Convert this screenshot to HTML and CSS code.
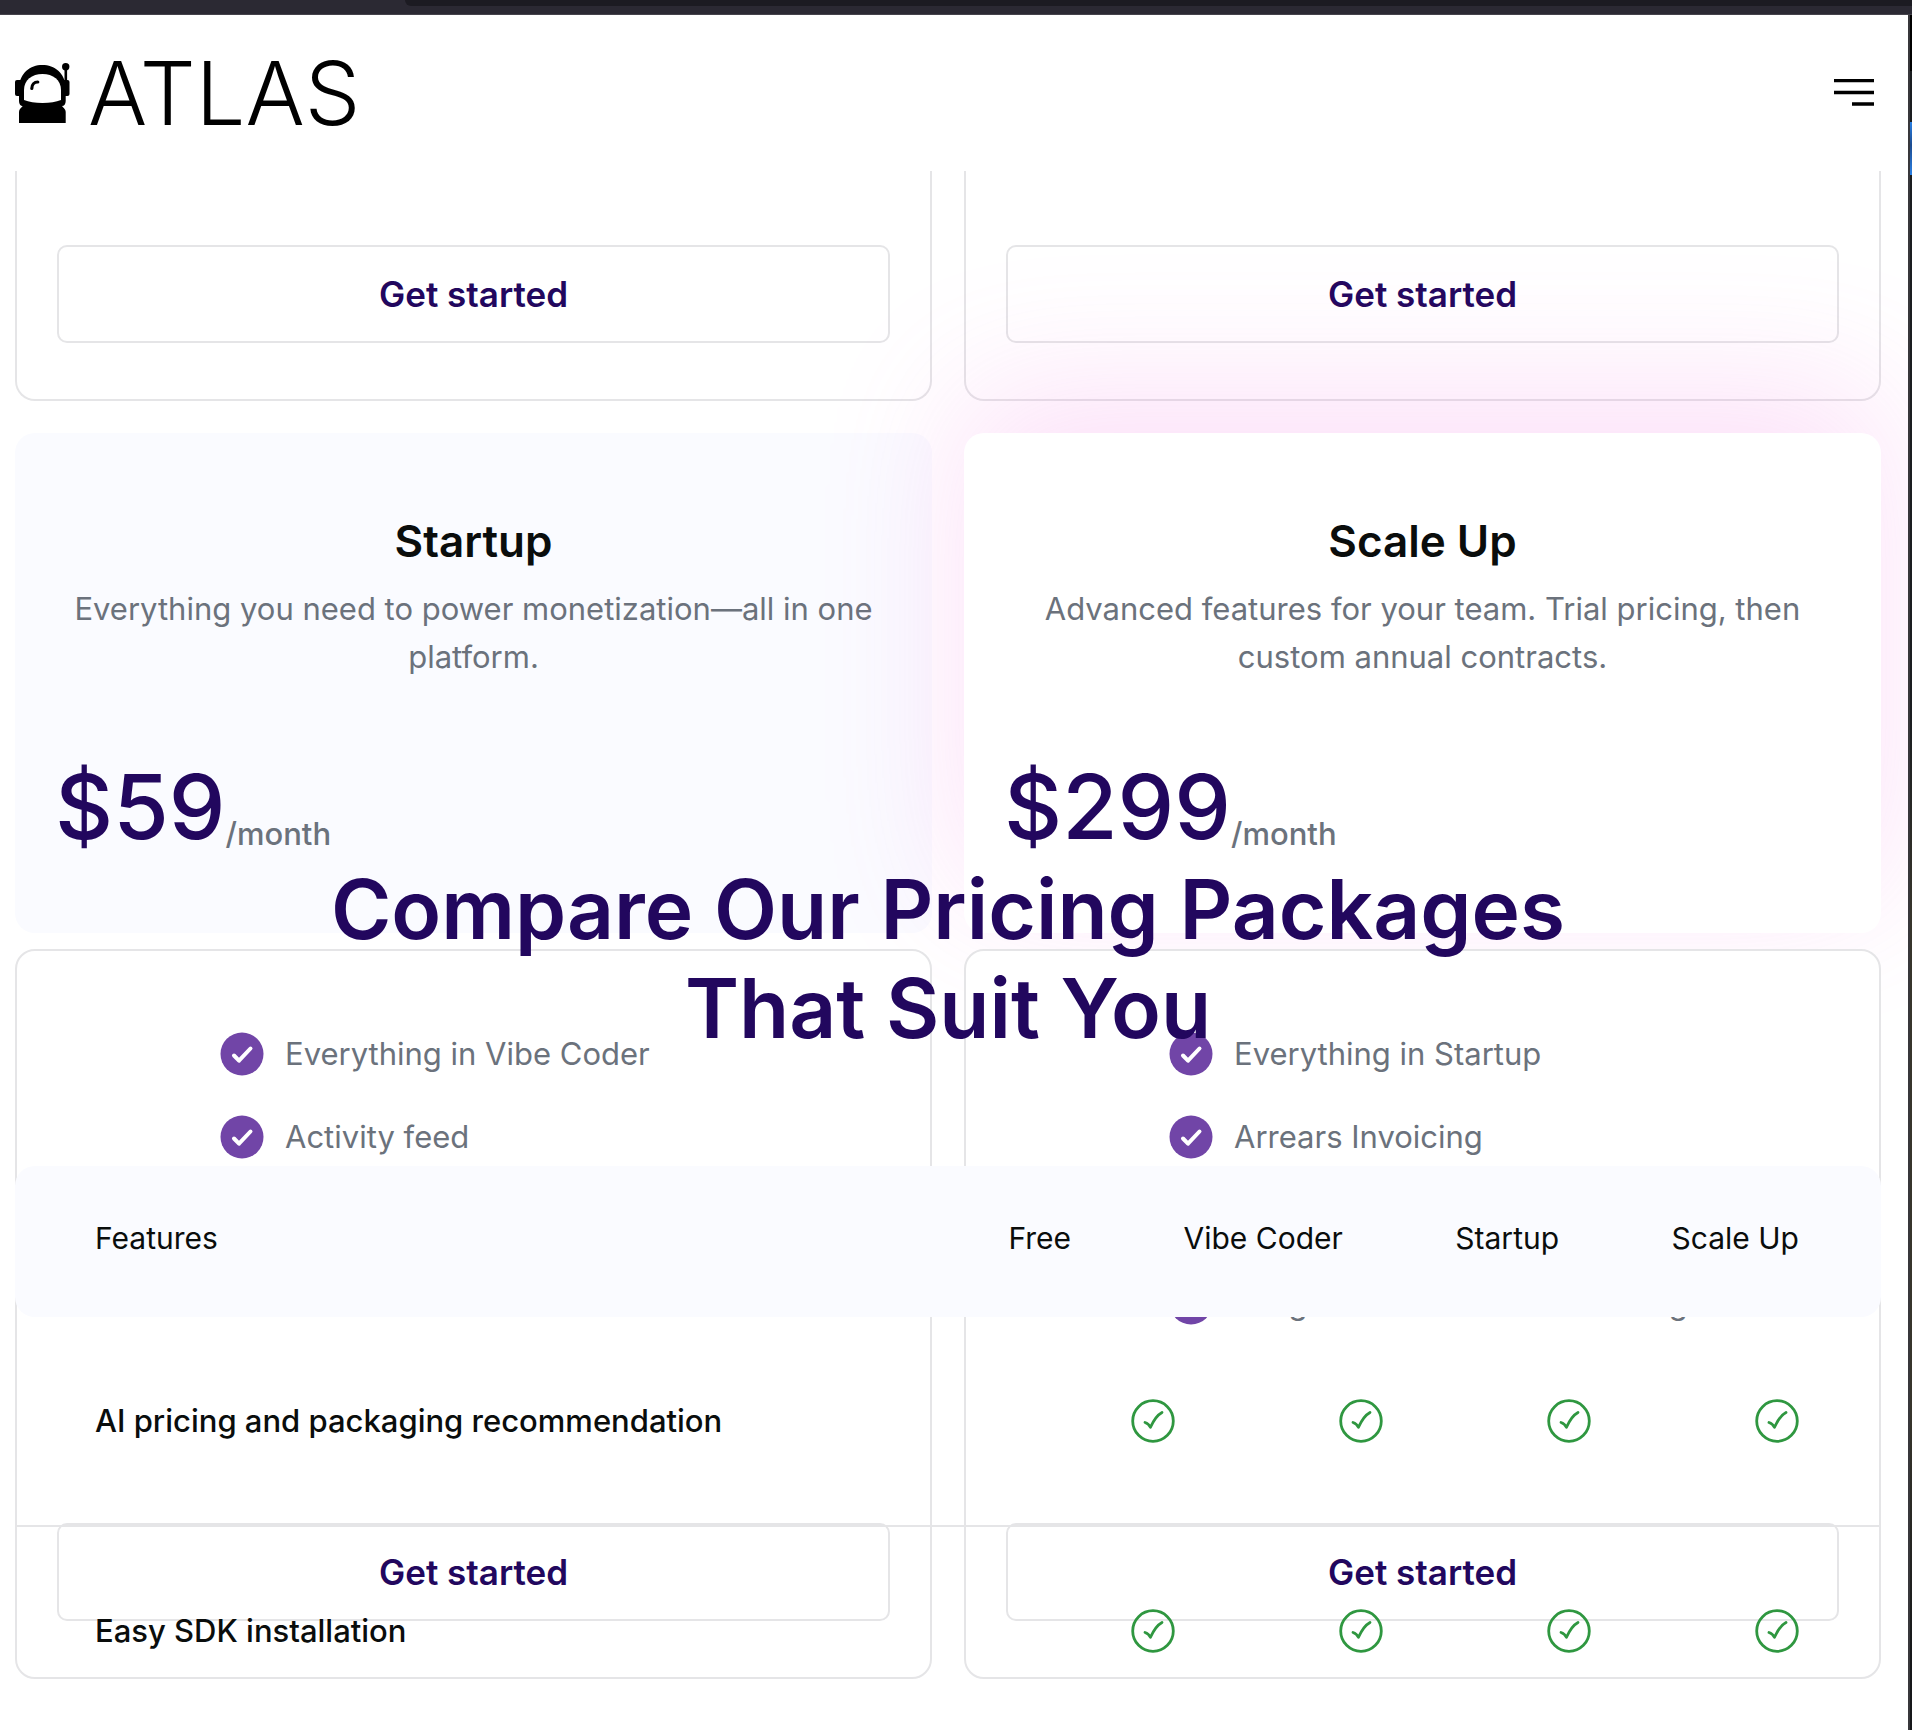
FILE: index.html
```html
<!DOCTYPE html>
<html lang="en">
<head>
    <meta charset="UTF-8">
    <meta name="viewport" content="width=device-width, initial-scale=1.0">
    <title>Atlas - Pricing</title>
    <link rel="stylesheet" href="styles.css">
</head>
<body>
    <!-- shared icons -->
    <svg class="sprite" aria-hidden="true">
        <symbol id="check-solid" viewBox="0 0 44 44">
            <circle cx="22" cy="22" r="21.5" fill="#7145a7"/>
            <path d="M14 23.5l5 5.2L30.500 16.500" fill="none" stroke="#fff" stroke-width="4" stroke-linecap="round" stroke-linejoin="round"/>
        </symbol>
        <symbol id="check-outline" viewBox="0 0 44 44">
            <circle cx="22" cy="22" r="20.300" fill="none" stroke="#2f9740" stroke-width="2.800"/>
            <path d="M14 23.500c2.500.800 4 2 5.500 4.800C22.500 21.500 25.500 16.500 31 13.500" fill="none" stroke="#2f9740" stroke-width="2.800" stroke-linecap="round" stroke-linejoin="round"/>
        </symbol>
    </svg>

    <div class="titlebar"><div class="tabstrip"></div></div>

    <div class="window">
        <div class="page">
            <header class="header">
                <a class="logo" href="#">
                    <svg class="logo-icon" viewBox="0 0 55 60" aria-hidden="true">
                        <circle cx="50.700" cy="3.700" r="3.700"/>
                        <rect x="49.500" y="4" width="2.600" height="15"/>
                        <rect x="0" y="17" width="8" height="16" rx="2"/>
                        <rect x="46.500" y="17" width="8" height="16" rx="2"/>
                        <path d="M4 38V24C5 10 15 2 27.300 2S50 10 50.700 24v14c0 3-1.500 5-3.700 5 1 1.500 3.700 3 3.700 6v11H4V49c0-3 2.500-4.500 3.700-6C5.500 43 4 41 4 38z"/>
                        <path d="M9 37V27C9 17 17 11 27.500 11S46 17 46 27v10c-5 2-11 3-18.500 3S14 39 9 37z" fill="#fff"/>
                        <path d="M16.800 25.500c0-4 2.500-6.500 6-6.500" fill="none" stroke="#000" stroke-width="3.200" stroke-linecap="round"/>
                    </svg>
                    <span class="logo-text">ATLAS</span>
                </a>
                <button class="menu-btn" type="button" aria-label="Menu">
                    <svg viewBox="0 0 40 28" aria-hidden="true">
                        <path d="M0 1.500h40M0 13.500h40M18 25h22" stroke="#000" stroke-width="3.400"/>
                    </svg>
                </button>
            </header>

            <main class="stage">
                <section class="plans">
                    <div class="card card-tail">
                        <button class="cta" type="button">Get started</button>
                    </div>
                    <div class="card card-tail">
                        <button class="cta" type="button">Get started</button>
                    </div>

                    <div class="plan plan-startup">
                        <h2>Startup</h2>
                        <p class="plan-text">Everything you need to power monetization—all in one platform.</p>
                        <div class="price"><span class="amount">$59</span><span class="period">/month</span></div>
                    </div>
                    <div class="plan plan-scale">
                        <h2>Scale Up</h2>
                        <p class="plan-text">Advanced features for your team. Trial pricing, then custom annual contracts.</p>
                        <div class="price"><span class="amount">$299</span><span class="period">/month</span></div>
                    </div>

                    <div class="card card-list">
                        <ul class="perks">
                            <li><svg><use href="#check-solid"/></svg>Everything in Vibe Coder</li>
                            <li><svg><use href="#check-solid"/></svg>Activity feed</li>
                        </ul>
                        <button class="cta" type="button">Get started</button>
                    </div>
                    <div class="card card-list">
                        <ul class="perks">
                            <li><svg><use href="#check-solid"/></svg>Everything in Startup</li>
                            <li><svg><use href="#check-solid"/></svg>Arrears Invoicing</li>
                            <li><svg><use href="#check-solid"/></svg>Revenue recognition</li>
                            <li><svg><use href="#check-solid"/></svg>Integrations with AI accounting</li>
                        </ul>
                        <button class="cta" type="button">Get started</button>
                    </div>
                </section>

                <section class="compare">
                    <h1>Compare Our Pricing Packages That Suit You</h1>
                    <table class="features">
                        <thead>
                            <tr>
                                <th class="name" scope="col">Features</th>
                                <th scope="col">Free</th>
                                <th scope="col">Vibe Coder</th>
                                <th scope="col">Startup</th>
                                <th scope="col">Scale Up</th>
                            </tr>
                        </thead>
                        <tbody>
                            <tr>
                                <td class="name">AI pricing and packaging recommendation</td>
                                <td><svg role="img" aria-label="Included"><use href="#check-outline"/></svg></td>
                                <td><svg role="img" aria-label="Included"><use href="#check-outline"/></svg></td>
                                <td><svg role="img" aria-label="Included"><use href="#check-outline"/></svg></td>
                                <td><svg role="img" aria-label="Included"><use href="#check-outline"/></svg></td>
                            </tr>
                            <tr>
                                <td class="name">Easy SDK installation</td>
                                <td><svg role="img" aria-label="Included"><use href="#check-outline"/></svg></td>
                                <td><svg role="img" aria-label="Included"><use href="#check-outline"/></svg></td>
                                <td><svg role="img" aria-label="Included"><use href="#check-outline"/></svg></td>
                                <td><svg role="img" aria-label="Included"><use href="#check-outline"/></svg></td>
                            </tr>
                        </tbody>
                    </table>
                </section>
            </main>
        </div>
        <div class="edge"></div>
    </div>
</body>
</html>
```
FILE: styles.css
```css
* {
    margin: 0;
    padding: 0;
    box-sizing: border-box;
}

body {
    height: 100vh;
    display: flex;
    flex-direction: column;
    overflow: hidden;
    background: #fff;
    color: #0a0d0c;
    font-family: Inter, 'Liberation Sans', sans-serif;
    font-size: 31px;
    line-height: 48px;
}

button {
    font-family: inherit;
    background: none;
    border: none;
    cursor: pointer;
}

.sprite {
    position: absolute;
    width: 0;
    height: 0;
}

/* Window frame */
.titlebar {
    flex: 0 0 15px;
    padding-left: 405px;
    background: #2b2933;
    border-bottom: 1px solid #45434b;
}

.tabstrip {
    height: 6px;
    background: #1c1b22;
    border-bottom-left-radius: 8px;
}

.window {
    flex: 1;
    min-height: 0;
    display: flex;
}

.page {
    flex: 1;
    min-width: 0;
    overflow: hidden;
}

.edge {
    flex: 0 0 4px;
    border-left: 2px solid #38373b;
    background: linear-gradient(#000 56px, #1a1d20 56px, #1a1d20 107px, #2a80e4 107px, #1d4c90 130px, #2a80e4 160px, #1a1d20 160px, #1a1d20 700px, #37352c 900px, #37352c 1400px, #16181a 1640px);
}

/* Header */
.header {
    position: relative;
    z-index: 2;
    height: 156px;
    padding: 0 34px 0 15px;
    display: flex;
    align-items: center;
    justify-content: space-between;
    background: #fff;
}

.logo {
    display: flex;
    align-items: center;
    gap: 18px;
    color: #000;
    text-decoration: none;
}

.logo-icon {
    width: 55px;
    height: 60px;
}

.logo-text {
    font-size: 88px;
    font-weight: 300;
    line-height: 60px;
}

.menu-btn {
    width: 40px;
    height: 28px;
}

.menu-btn svg {
    display: block;
    width: 100%;
    height: 100%;
}

/* The comparison is layered over the plan cards */
.stage {
    display: grid;
    grid-template-columns: minmax(0, 1fr);
    padding: 0 27px 0 15px;
}

.plans,
.compare {
    grid-area: 1 / 1;
}

.plans {
    display: grid;
    grid-template-columns: 1fr 1fr;
    gap: 16px 32px;
    align-content: start;
}

.card {
    display: flex;
    flex-direction: column;
    padding: 81px 40px 56px;
    border: 2px solid #e5e5e7;
    border-radius: 20px;
}

.card-tail {
    margin-bottom: 16px;
    padding-top: 74px;
    border-top: none;
    border-radius: 0 0 20px 20px;
}

.card-list {
    position: relative;
    background: #fff;
}

.cta {
    width: 100%;
    height: 98px;
    margin-top: auto;
    border: 2px solid #e5e5e7;
    border-radius: 10px;
    color: #22075e;
    font-size: 35px;
    font-weight: 600;
}

.plan {
    padding: 80px 40px 78px;
    border-radius: 20px;
    text-align: center;
}

.plan-startup {
    background: #fafbff;
}

.plan-scale {
    background: #fff;
    box-shadow: 0 -40px 144px rgba(240, 95, 220, 0.2);
}

.plan h2 {
    margin-bottom: 16px;
    font-size: 44px;
    font-weight: 600;
    line-height: 56px;
}

.plan-text {
    margin-bottom: 78px;
    color: #6b727c;
}

.price {
    display: flex;
    align-items: flex-end;
}

.amount {
    color: #22075e;
    font-size: 90px;
    font-weight: 500;
    line-height: 96px;
}

.period {
    color: #6b727c;
    font-weight: 500;
    line-height: 42px;
}

.perks {
    display: flex;
    flex-direction: column;
    gap: 39px;
    margin-bottom: 198px;
    padding-left: 163px;
    list-style: none;
    color: #6b727c;
    line-height: 44px;
}

.perks li {
    display: flex;
    gap: 21px;
}

.perks svg,
.features svg {
    display: block;
    width: 44px;
    height: 44px;
}

/* Comparison table */
.compare {
    position: relative;
    padding-top: 689px;
}

.compare h1 {
    max-width: 1300px;
    margin: 0 auto 108px;
    color: #22075e;
    font-size: 82px;
    font-weight: 600;
    line-height: 99px;
    text-align: center;
}

.features,
.features thead,
.features tbody {
    display: block;
}

.features tr {
    display: flex;
    align-items: center;
    justify-content: space-between;
    padding: 0 82px 0 80px;
}

.features thead tr {
    height: 151px;
    padding-bottom: 8px;
    border-radius: 20px;
    background: #fafbff;
}

.features tbody tr {
    height: 210px;
    border-bottom: 2px solid #e5e5e7;
}

.features th {
    font-size: 30px;
    font-weight: 400;
    text-align: left;
}

.features th.name {
    flex: 0 0 47%;
}

.features td {
    flex: 0 0 208px;
    display: flex;
    justify-content: flex-end;
}

.features td.name {
    flex: 1;
    justify-content: flex-start;
    font-weight: 500;
}
```
